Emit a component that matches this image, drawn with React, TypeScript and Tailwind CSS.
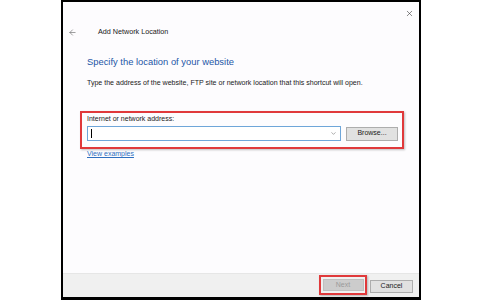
import { ArrowLeft, X, ChevronDown } from "lucide-react";

const font = { fontFamily: '"Liberation Sans", Arial, sans-serif' };

const App = () => {
  return (
    <div className="w-[484px] h-[300px] bg-white overflow-hidden" style={font}>
      <div className="ml-[61px] w-[360px] h-[300px] border-x-2 border-t-2 border-b-[3px] border-black bg-[#fdfcfe] flex flex-col">
        {/* close */}
        <div className="flex justify-end pt-[7px] pr-[5px]">
          <X className="w-[9px] h-[9px] text-[#333]" strokeWidth={1.5} />
        </div>

        {/* title row */}
        <div className="flex items-center h-[10px] mt-[9px] pl-[5px]">
          <ArrowLeft className="w-[9px] h-[9px] text-[#555]" strokeWidth={1.5} />
          <span className="ml-[21px] text-[7.2px] leading-[10px] text-[#1a1a1a]">Add Network Location</span>
        </div>

        <div className="pl-[24px] pr-[12px]">
          <h1 className="mt-[19px] text-[9.4px] leading-[12px] text-[#2456a6]">
            Specify the location of your website
          </h1>
          <p className="mt-[10px] text-[7.05px] leading-[9px] text-[#1a1a1a]">
            Type the address of the website, FTP site or network location that this shortcut will open.
          </p>

          {/* highlighted field */}
          <div className="mt-[24px] -ml-[7px] w-[324px] h-[38px] border-2 border-[#e0393b] shadow-[1px_1px_2px_rgba(0,0,0,0.25)] pl-[5px] pr-[4px] pt-[2px]">
            <div className="text-[7px] leading-[8px] text-[#1a1a1a]">Internet or network address:</div>
            <div className="flex items-center mt-[3px] gap-[5px]">
              <div className="w-[254px] h-[15px] border border-[#6fa6d9] bg-white flex items-center pl-[3px] pr-[3px]">
                <div className="w-px h-[9px] bg-black" />
                <div className="flex-1" />
                <ChevronDown className="w-[7px] h-[7px] text-[#444]" strokeWidth={1.5} />
              </div>
              <div className="w-[52px] h-[14px] border border-[#adadad] bg-[#e1e1e1] flex items-center justify-center text-[7px] text-[#1a1a1a]">
                Browse...
              </div>
            </div>
          </div>

          <div className="mt-[1px] text-[7px] leading-[8px] text-[#2f6fbf] underline">View examples</div>
        </div>

        <div className="flex-1" />

        {/* footer */}
        <div className="h-[24px] bg-[#f0f0f0] border-t border-[#e6e6e6] flex justify-end items-start pr-[6px]">
          <div className="mt-[1px] w-[48px] h-[20px] border-2 border-[#e0393b] flex items-center justify-center shadow-[1px_1px_2px_rgba(0,0,0,0.25)]">
            <div className="w-[41px] h-[12px] bg-[#cccccc] border border-[#bfbfbf] flex items-center justify-center text-[7px] text-[#9a9a9a]">
              Next
            </div>
          </div>
          <div className="ml-[3px] mt-[6px] w-[43px] h-[13px] bg-[#e1e1e1] border border-[#adadad] flex items-center justify-center text-[7px] text-[#1a1a1a]">
            Cancel
          </div>
        </div>
      </div>
    </div>
  );
};

export default App;
